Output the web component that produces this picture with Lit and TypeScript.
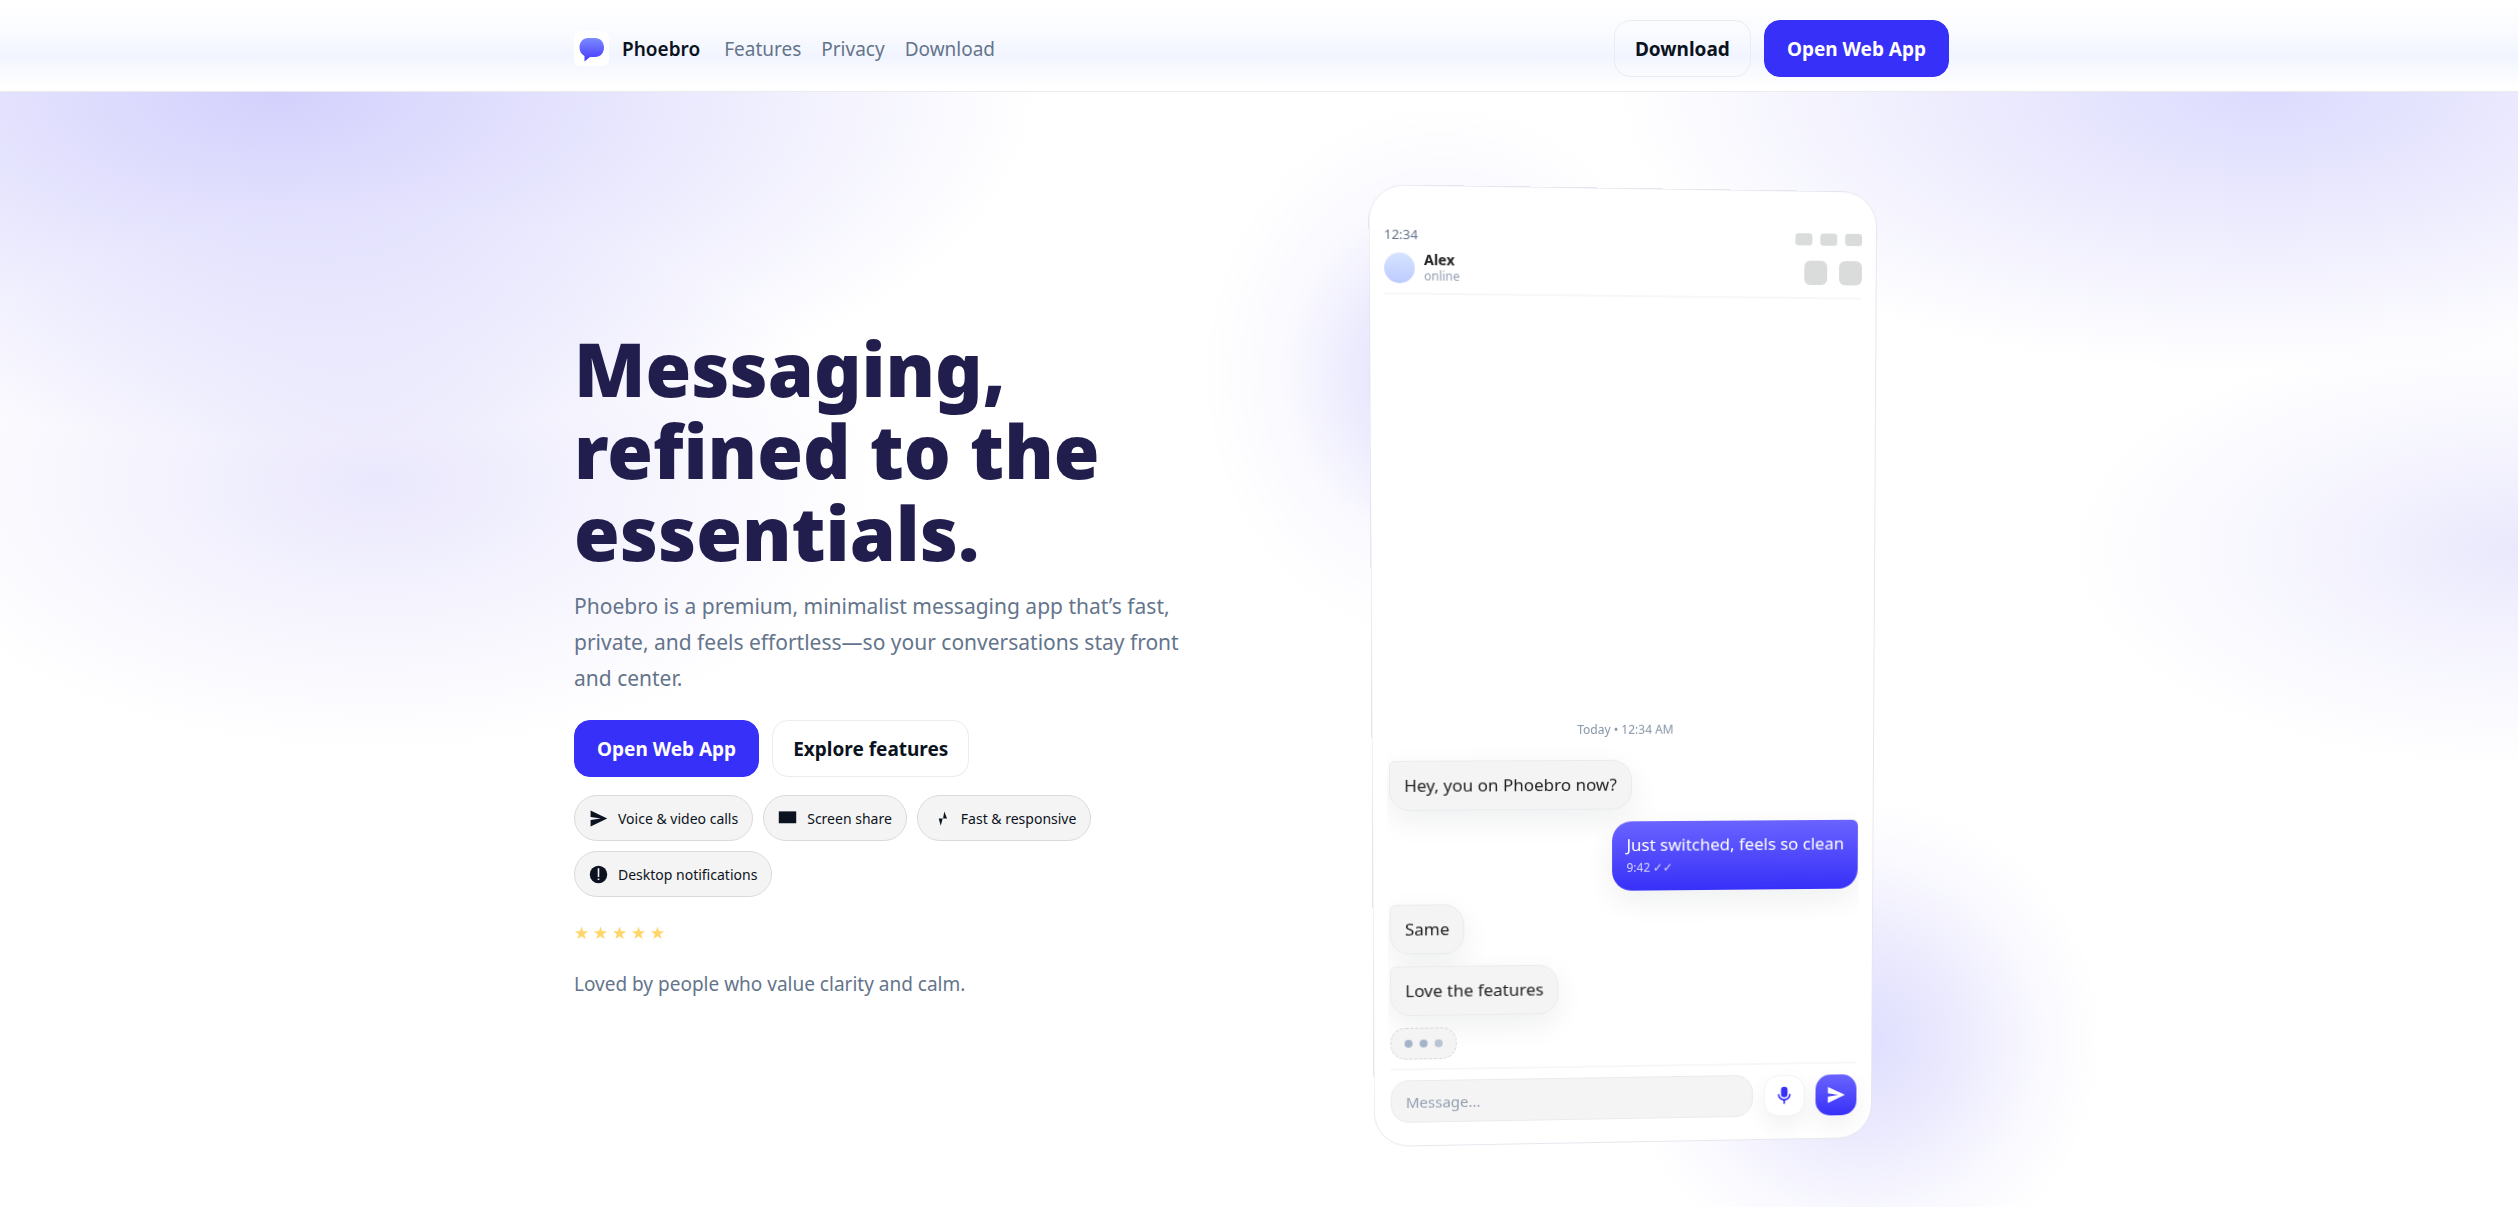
import { LitElement, html, css, svg } from "lit";
import { customElement } from "lit/decorators.js";

const send = svg`<path d="M2 2l21 10L2 22v-8l13-2-13-2z"/>`;
const screen = svg`<path d="M1 3h22v15H1z"/>`;
const bolt = svg`<path d="M15.500 3l3.500 9h-5zM8.500 12h5l-2.500 9z"/>`;
const alert = svg`<circle cx="12" cy="12" r="11"/><path fill="#f4f4f4" d="M11 4h2v11h-2zM11 17h2v2h-2z"/>`;
const mic = svg`<path d="M12 14a4 4 0 0 0 4-4V5a4 4 0 0 0-8 0v5a4 4 0 0 0 4 4zm6-4a6 6 0 0 1-12 0H4a8 8 0 0 0 7 7.900V22h2v-4.100A8 8 0 0 0 20 10z"/>`;

const chips = [
  { icon: send, label: "Voice & video calls" },
  { icon: screen, label: "Screen share" },
  { icon: bolt, label: "Fast & responsive" },
  { icon: alert, label: "Desktop notifications" },
];

const icon = (shape: unknown) =>
  html`<svg class="icon" viewBox="0 0 24 24" fill="currentColor" aria-hidden="true">${shape}</svg>`;

@customElement("phone-preview")
export class PhonePreview extends LitElement {
  static styles = css`
    :host { display: block; position: relative; perspective: 1500px; }
    * { box-sizing: border-box; }
    .glow { position: absolute; border-radius: 50%; pointer-events: none; }
    .glow-start { width: 480px; height: 540px; left: -170px; top: -90px;
      background: radial-gradient(closest-side, rgb(80 70 245 / .28), rgb(80 70 245 / .13) 30%, rgb(80 70 245 / .03) 65%, rgb(80 70 245 / 0)); }
    .glow-end { width: 480px; height: 480px; right: -225px; bottom: -132px;
      background: radial-gradient(closest-side, rgb(80 80 255 / .19), rgb(80 70 245 / .12) 35%, rgb(80 70 245 / .03) 75%, rgb(80 70 245 / 0)); }
    .phone { position: relative; height: 955px; padding: 35px 14px 23px; display: flex; flex-direction: column;
      background: #fff; border: 1px solid #e6e7ee; border-radius: 35px;
      transform: rotateX(-2deg) rotateY(3deg); }
    .status { display: flex; justify-content: space-between; align-items: center; height: 24px;
      font-size: 13px; color: #64748b; }
    .bars { display: flex; gap: 8px; }
    .bars i { width: 17px; height: 12px; border-radius: 3px; background: #d9dcdb; }
    .peer { display: flex; align-items: center; gap: 9px; padding-bottom: 8px; margin-top: 5px;
      border-bottom: 2px solid #f7f7f8; }
    .avatar { width: 30px; height: 30px; border-radius: 50%; background: linear-gradient(#d6e4ff, #bccbff); }
    .who { flex: 1; display: grid; line-height: 16px; font-size: 12px; color: #94a0b2; }
    .who b { font-size: 14px; color: #222; }
    .actions { display: flex; gap: 12px; }
    .actions i { width: 23px; height: 24px; border-radius: 6px; background: #d9dcdb; }
    .chat { flex: 1; display: flex; flex-direction: column; justify-content: flex-end; align-items: flex-start;
      gap: 12px; padding: 0 1px 9px 2px; overflow: hidden; }
    .day { align-self: center; font-size: 12px; color: #8593a6; line-height: 20px; margin-bottom: 8px; }
    .bubble { padding: 12px 14px; line-height: 24px; font-size: 17px; color: #222; background: #f4f4f4;
      border: 1px solid #ebebec; border-radius: 6px 20px 20px; box-shadow: 0 10px 30px #0f172a12; }
    .mine { align-self: flex-end; color: #fff; background: linear-gradient(#6a63ff, #3730f8); border: 0;
      border-radius: 20px 6px 20px 20px; }
    .mine small { display: block; font-size: 12px; line-height: 22px; color: #d8d6ff; }
    .typing { display: flex; gap: 7px; padding: 11px 13px; background: #f4f4f4; border: 1px dashed #d5d5d8;
      border-radius: 15px; }
    .typing i { width: 8px; height: 8px; border-radius: 50%; background: #a4b4c8; }
    .typing i:last-child { background: #b9c4d3; }
    .composer { display: flex; align-items: center; gap: 11px; margin: 0 1px 0 2px; padding-top: 10px;
      border-top: 2px solid #f7f7f8; }
    .field { flex: 1; min-width: 0; height: 43px; padding: 0 14px; font: inherit; font-size: 15px; color: #222;
      background: #f4f4f4; border: 1px solid #ebebec; border-radius: 18px; }
    .field::placeholder { color: #94a0b2; opacity: 1; }
    .round { width: 42px; height: 42px; display: grid; place-items: center; padding: 0; border-radius: 15px;
      color: #3730f8; background: #fff; border: 1px solid #f2f2f4; box-shadow: 0 10px 24px #0f172a0f; }
    .send { color: #fff; background: linear-gradient(#6a63ff, #3730f8); border: 0; }
    .icon { width: 20px; height: 20px; }
  `;

  render() {
    return html`
      <div class="glow glow-start"></div>
      <div class="glow glow-end"></div>
      <section class="phone" aria-label="Conversation with Alex">
        <div class="status"><span>12:34</span><span class="bars"><i></i><i></i><i></i></span></div>
        <div class="peer">
          <span class="avatar"></span>
          <div class="who"><b>Alex</b><span>online</span></div>
          <span class="actions"><i></i><i></i></span>
        </div>
        <div class="chat">
          <div class="day">Today • 12:34 AM</div>
          <div class="bubble">Hey, you on Phoebro now?</div>
          <div class="bubble mine">Just switched, feels so clean<small>9:42 ✓✓</small></div>
          <div class="bubble">Same</div>
          <div class="bubble">Love the features</div>
          <div class="typing"><i></i><i></i><i></i></div>
        </div>
        <form class="composer">
          <input class="field" type="text" placeholder="Message..." aria-label="Message" />
          <button class="round" type="button" aria-label="Record voice">${icon(mic)}</button>
          <button class="round send" type="button" aria-label="Send">${icon(send)}</button>
        </form>
      </section>
    `;
  }
}

@customElement("app-root")
export class AppRoot extends LitElement {
  static styles = css`
    :host { display: flex; flex-direction: column; min-height: 100vh; overflow: hidden; color: #0b1220;
      font-family: "Noto Sans", "Open Sans", sans-serif; font-size: 19px; }
    * { box-sizing: border-box; }
    a { color: inherit; text-decoration: none; }
    .bar { border-bottom: 1px solid #ececef; background: linear-gradient(#fff, #fafbff 35%, #f2f5ff 62%, #fff 96%); }
    .wrap { width: 100%; max-width: 1380px; margin: 0 auto; padding-left: 5px; }
    .nav { display: flex; align-items: center; padding-top: 20px; padding-bottom: 14px; }
    .brand { display: flex; align-items: center; gap: 13px; font-weight: 600; }
    .mark { width: 35px; height: 35px; border-radius: 6px; background: #fff; }
    .links { flex: 1; display: flex; gap: 20px; margin-left: 24px; color: #64748b; }
    .row { display: flex; flex-wrap: wrap; gap: 13px; }
    .btn { height: 57px; display: flex; align-items: center; padding: 0 20px; border-radius: 16px;
      border: 1px solid #ebebf0; font-weight: 700; }
    .primary { padding: 0 22px; color: #fff; background: #3730f8; border-color: #3730f8; }
    .hero { flex: 1; background:
      radial-gradient(760px 350px at 11% 0, rgb(80 70 245 / .25), rgb(80 70 245 / .13) 48%, rgb(80 70 245 / 0)),
      radial-gradient(500px 270px at 15% 35%, rgb(90 75 235 / .13), rgb(90 75 235 / .06) 50%, rgb(90 75 235 / 0)),
      radial-gradient(650px 280px at 90% 0, rgb(80 75 250 / .2), rgb(80 70 245 / .1) 48%, rgb(80 70 245 / 0)),
      radial-gradient(450px 220px at 100% 41%, rgb(80 70 235 / .12), rgb(80 70 245 / .05) 50%, rgb(80 70 245 / 0)),
      #fff; }
    .split { display: grid; grid-template-columns: minmax(0, 1fr) 504px; align-items: center;
      padding-top: 101px; padding-right: 72px; padding-bottom: 58px; }
    .copy { display: flex; flex-direction: column; align-items: flex-start; padding-bottom: 16px; }
    h1 { margin: 0; max-width: 640px; font-size: 74px; line-height: 82px; font-weight: 900; color: #211e4d; }
    p { margin: 0; }
    .lead { max-width: 630px; margin: 14px 0 24px; font-size: 21px; line-height: 36px; color: #64748b; }
    .chips { display: flex; flex-wrap: wrap; gap: 10px; max-width: 560px; margin: 18px 0 28px; padding: 0; list-style: none; }
    .chip { height: 46px; display: flex; align-items: center; gap: 10px; padding: 0 14px; font-size: 14px;
      background: #f4f4f4; border: 1px solid #d9dbdb; border-radius: 23px; }
    .icon { width: 19px; height: 19px; }
    .stars { display: flex; gap: 4px; }
    .star { width: 15px; height: 16px; fill: #ffd66b; }
    .loved { margin-top: 30px; color: #64748b; }
  `;

  render() {
    return html`
      <header class="bar">
        <div class="wrap nav">
          <a class="brand" href="#">
            <svg class="mark" viewBox="0 0 35 35" aria-hidden="true">
              <defs><linearGradient id="g" x1="0" y1="0" x2="0" y2="1">
                <stop offset="0" stop-color="#7c8bff"/><stop offset="1" stop-color="#4338ff"/>
              </linearGradient></defs>
              <path fill="url(#g)" d="M14 7h7c5.500 0 9 4 9 9.500s-3.500 9.500-9 9.500h-5l-5.500 4.500v-5.500C7.500 23.500 5.500 20.500 5.500 16.500 5.500 11 9 7 14 7z"/>
            </svg>
            Phoebro
          </a>
          <nav class="links"><a href="#features">Features</a><a href="#privacy">Privacy</a><a href="#download">Download</a></nav>
          <div class="row"><a class="btn" href="#download">Download</a><a class="btn primary" href="#app">Open Web App</a></div>
        </div>
      </header>
      <main class="hero">
        <div class="wrap split">
          <div class="copy">
            <h1>Messaging, refined to the essentials.</h1>
            <p class="lead">Phoebro is a premium, minimalist messaging app that’s fast, private, and feels effortless—so your conversations stay front and center.</p>
            <div class="row"><a class="btn primary" href="#app">Open Web App</a><a class="btn" href="#features">Explore features</a></div>
            <ul class="chips">${chips.map((c) => html`<li class="chip">${icon(c.icon)}${c.label}</li>`)}</ul>
            <div class="stars" role="img" aria-label="Five stars">
              ${[1, 2, 3, 4, 5].map(() => html`<svg class="star" viewBox="0 0 24 24"><path d="M12 1.500l2.700 7.600h8l-6.400 4.800 2.400 7.800-6.700-4.700-6.700 4.700 2.400-7.800L1.300 9.100h8z"/></svg>`)}
            </div>
            <p class="loved">Loved by people who value clarity and calm.</p>
          </div>
          <phone-preview></phone-preview>
        </div>
      </main>
    `;
  }
}
